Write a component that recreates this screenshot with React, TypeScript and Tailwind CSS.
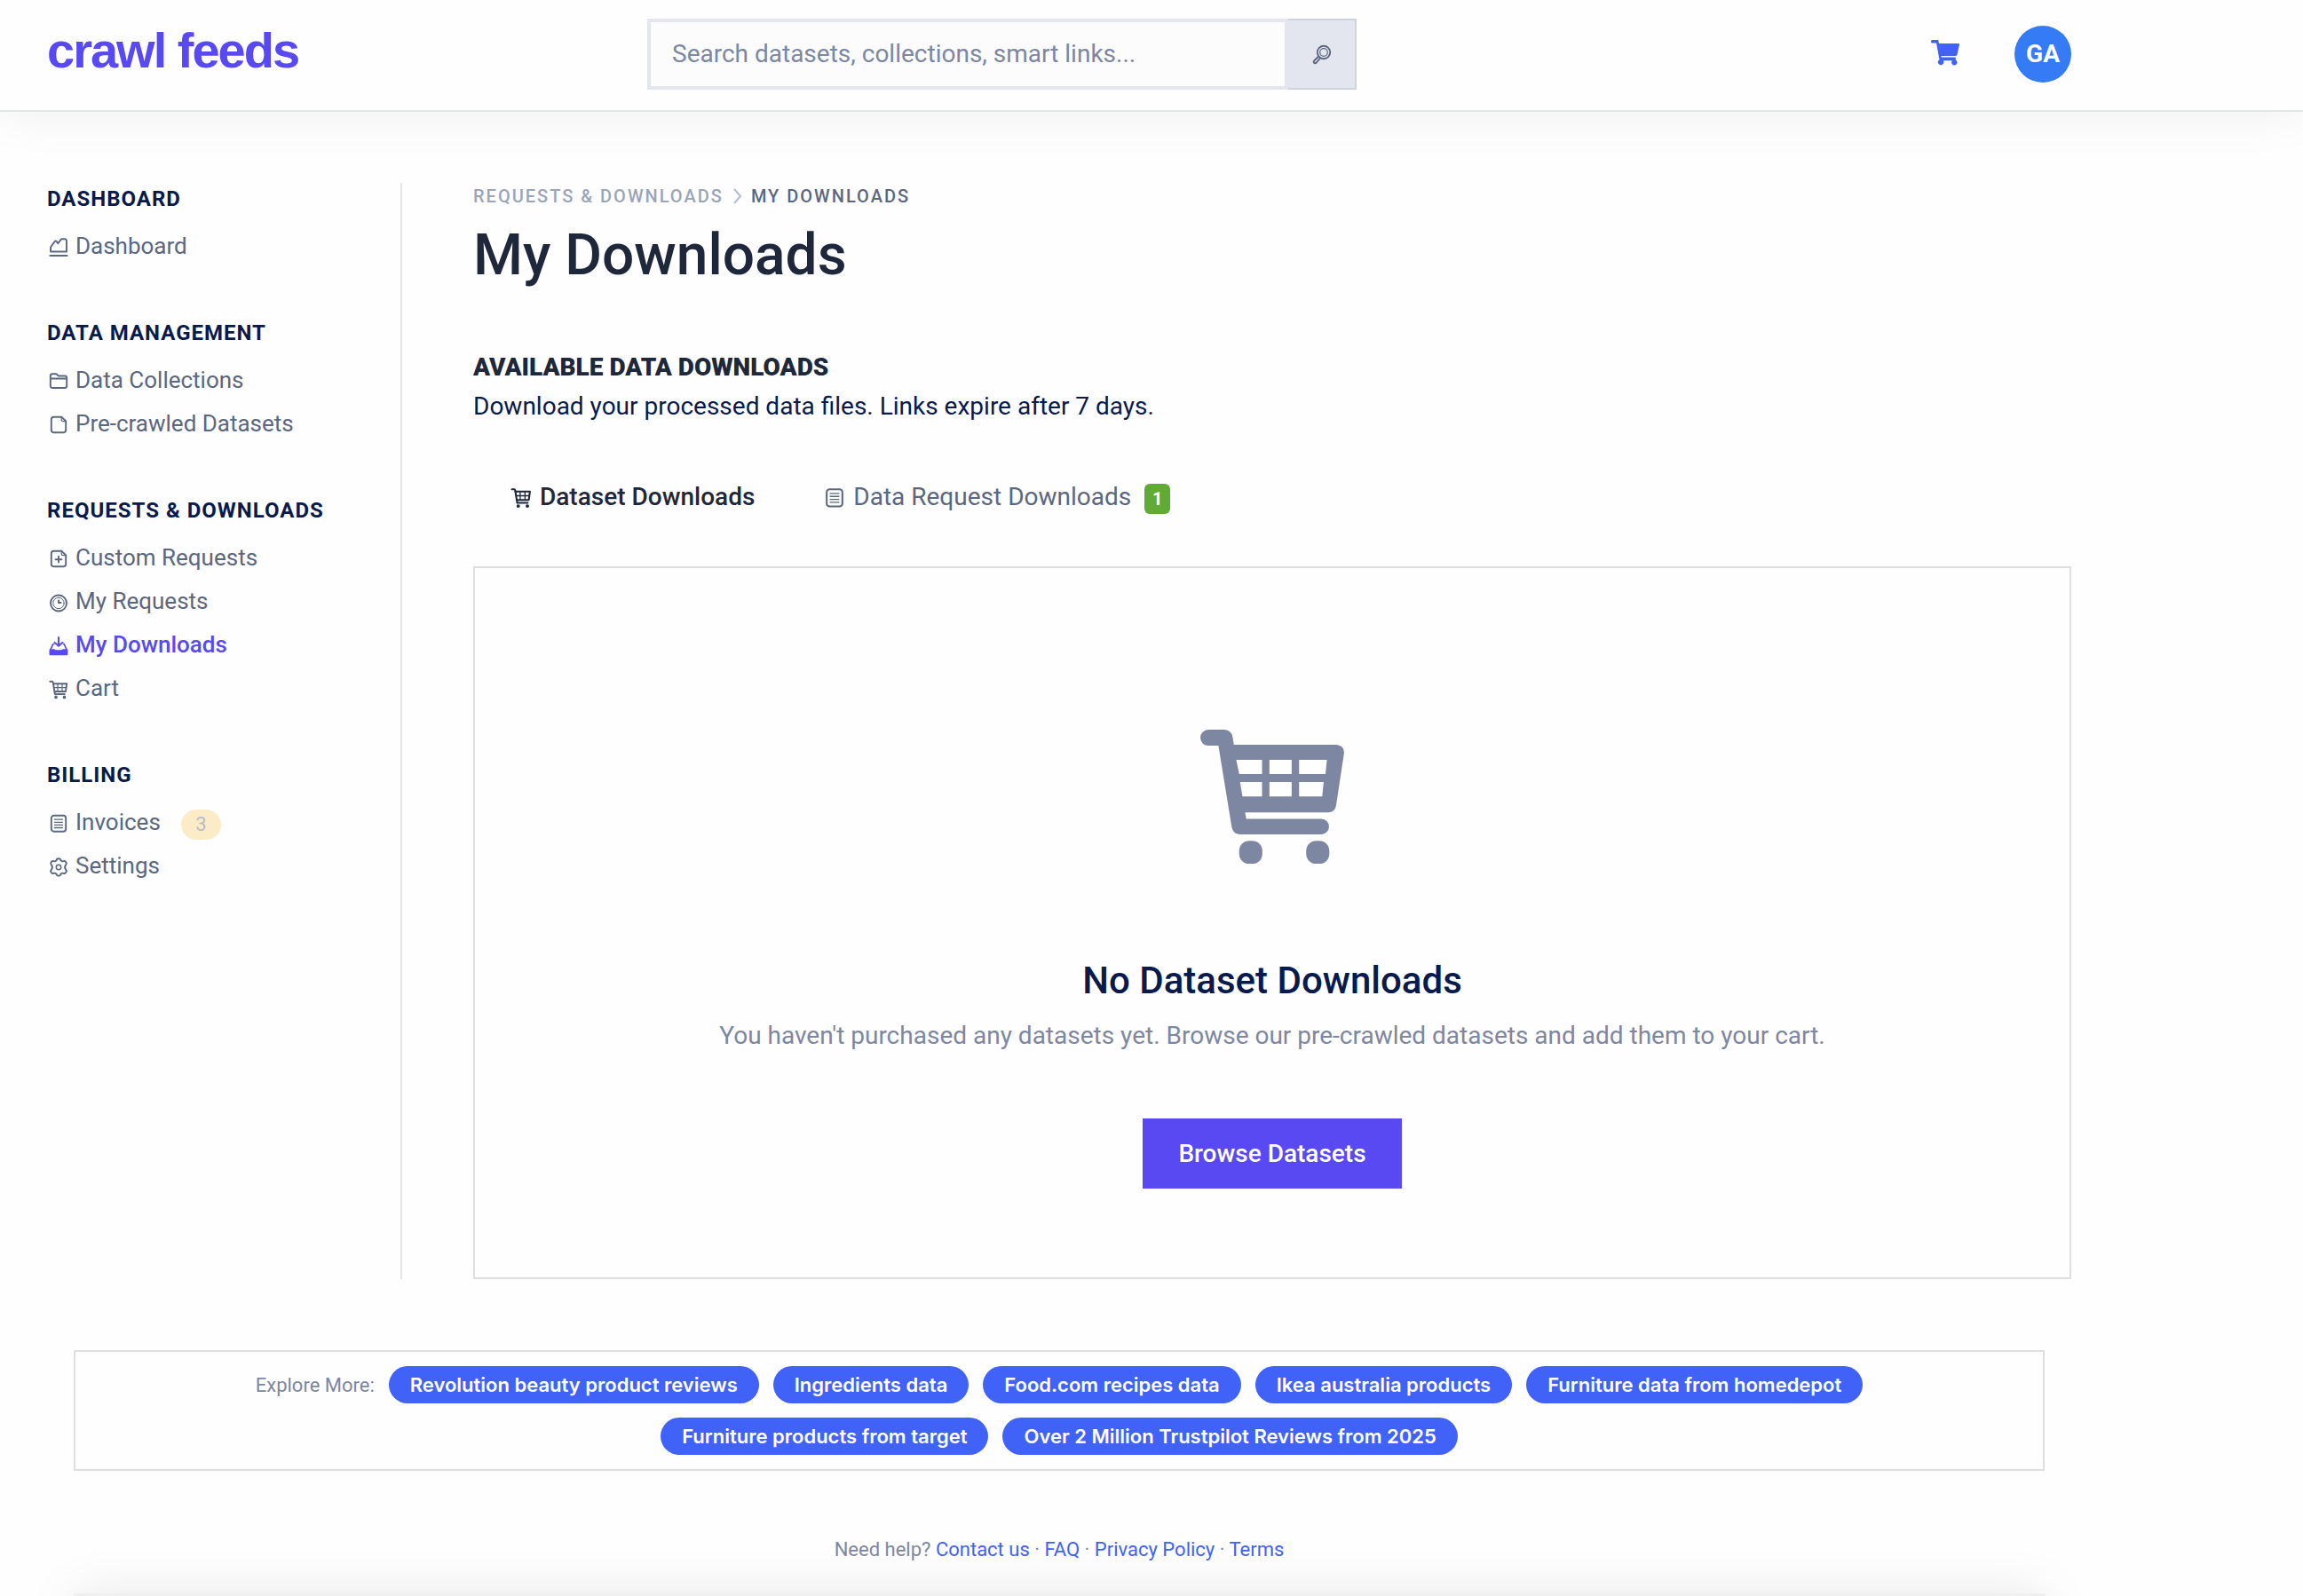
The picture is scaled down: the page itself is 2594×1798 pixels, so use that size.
import type { ReactNode } from "react";

type IconProps = { className?: string };

function LineIcon({ className = "", children }: IconProps & { children: ReactNode }) {
    return (
        <svg
            viewBox="0 0 26 26"
            fill="none"
            stroke="currentColor"
            strokeWidth="1.9"
            strokeLinejoin="round"
            strokeLinecap="round"
            aria-hidden="true"
            className={`shrink-0 ${className}`}
        >
            {children}
        </svg>
    );
}

const ChartIcon = (p: IconProps) => (
    <LineIcon {...p}>
        <path d="M4 18.5v-4.2c0-1 .3-1.600.9-2.200L8.500 7.200c1-1 2-.8 2.600.200l1.200 1.800 3-4c.5-.6 1-.9 1.900-.9h2.300c1.600 0 2.500.9 2.500 2.400v11.800z" />
        <path d="M3.500 23h19" strokeWidth="2.2" />
    </LineIcon>
);

const FolderIcon = (p: IconProps) => (
    <LineIcon {...p}>
        <path d="M3.800 18.800V7.500c0-1.500.8-2.300 2.200-2.300h4.200c1.300 0 1.700 2.300 3 2.300H20c1.400 0 2.200.8 2.200 2.200v9.100c0 1.400-.8 2.200-2.200 2.200H6c-1.400 0-2.200-.8-2.200-2.200z" />
        <path d="M4 10.500h18" />
    </LineIcon>
);

const FileIcon = (p: IconProps) => (
    <LineIcon {...p}>
        <path d="M16.500 4.800H7.500c-1.700 0-2.700 1-2.700 2.600v12.200c0 1.600 1 2.600 2.700 2.600h11c1.700 0 2.700-1 2.700-2.600V9.500z" />
        <path d="M16.200 5v2.700c0 1.200.7 1.900 1.900 1.900h3" strokeWidth="1.200" />
    </LineIcon>
);

const FilePlusIcon = (p: IconProps) => (
    <LineIcon {...p}>
        <path d="M16.500 4.800H7.500c-1.700 0-2.700 1-2.700 2.600v12.200c0 1.600 1 2.600 2.700 2.600h11c1.700 0 2.700-1 2.700-2.600V9.500z" />
        <path d="M16.200 5v2.700c0 1.200.7 1.900 1.900 1.900h3" strokeWidth="1.200" />
        <path d="M13 10.800v6.800M9.600 14.200h6.800" />
    </LineIcon>
);

const ClockIcon = (p: IconProps) => (
    <LineIcon {...p}>
        <circle cx="13" cy="14.500" r="9" />
        <circle cx="13" cy="14.500" r="6.200" strokeWidth="1" />
        <path d="M13 11.500v2.500h2.500" strokeWidth="2" />
    </LineIcon>
);

const InboxIcon = (p: IconProps) => (
    <LineIcon {...p}>
        <path d="M13 4v9.500M8.500 9.800l4.500 4 4.500-4" strokeWidth="2" />
        <path d="M7.500 11.500H6.800L3.900 18M18.500 11.500h.7l2.900 6.500" strokeWidth="1.700" />
        <path d="M3.500 18.200h4.600l1.500 1h6.800l1.500-1h4.600v5h-19z" fill="currentColor" />
    </LineIcon>
);

const CartIcon = (p: IconProps) => (
    <LineIcon {...p}>
        <path d="M3.300 4.800h2.500c.5 0 .8.3.9.800L8.900 19h11" />
        <path d="M7 7.200h15.200l-1.200 8.800H8.400" />
        <path d="M7.600 11.600h14M12 7.500v8.300M17 7.500v8.300" strokeWidth="1.200" />
        <circle cx="10" cy="22.400" r=".9" fill="currentColor" />
        <circle cx="19.500" cy="22.400" r=".9" fill="currentColor" />
    </LineIcon>
);

const ListIcon = (p: IconProps) => (
    <LineIcon {...p}>
        <rect x="4.800" y="4.800" width="16.400" height="18" rx="3" />
        <path d="M8.500 9.200h9M8.500 12.300h9M8.500 15.400h9M8.500 18.500h9" strokeWidth="1.300" />
    </LineIcon>
);

const GearIcon = (p: IconProps) => (
    <LineIcon {...p}>
        <path d="M10.500 6.300c.3-1.700 1-2 2.500-2s2.200.3 2.500 2c.8 1 1.800 1.300 3 .9 1.400-.6 2.100-.2 3 1.200.8 1.400.6 2.100-.5 3.100-1.300 1.700-1.300 3.300 0 5 1.100 1 1.300 1.700.5 3.100-.9 1.400-1.600 1.800-3 1.200-1.200-.4-2.200-.1-3 .9-.3 1.700-1 2-2.500 2s-2.200-.3-2.500-2c-.8-1-1.800-1.300-3-.9-1.400.6-2.100.2-3-1.200-.8-1.400-.6-2.100.5-3.100 1.300-1.700 1.300-3.300 0-5-1.100-1-1.300-1.700-.5-3.100.9-1.400 1.600-1.800 3-1.200 1.200.4 2.200.1 3-.9z" />
        <circle cx="13" cy="14" r="2.700" strokeWidth="1.500" />
    </LineIcon>
);

const SearchIcon = (p: IconProps) => (
    <LineIcon {...p}>
        <circle cx="15" cy="11" r="7.200" />
        <circle cx="15" cy="11" r="4.300" strokeWidth="1.200" />
        <path d="M9.300 15.500l-5 4.800c-.9 1-.8 1.900 0 2.600.8.600 1.700.5 2.500-.4l4.300-5.200" />
    </LineIcon>
);

function CartSolid({ className }: IconProps) {
    return (
        <svg viewBox="0 0 32 29" fill="currentColor" aria-hidden="true" className={className}>
            <path d="M1.500 0h5.800c.7 0 1.100.4 1.200 1l.5 2.900h21.600c.9 0 1.500.7 1.300 1.600l-2.400 11c-.2.900-.8 1.400-1.600 1.400H11.400l.3 1.600h15c.9 0 1.400.5 1.200 1.300l-.4 1.500a3.200 3.200 0 1 1-3.700 1h-10a3.200 3.200 0 1 1-4.300-1.100L6 3.500H1.500C.5 3.500 0 2.800 0 1.700S.5 0 1.500 0z" />
        </svg>
    );
}

function BigCart({ className }: IconProps) {
    return (
        <svg viewBox="157 126 485 453" fill="currentColor" aria-hidden="true" className={className}>
            <path
                fillRule="evenodd"
                d="M184 126h54q24 2 28 25l4 26h347q24 3 25 26l-27 178q-4 23-26 24H308l4 22h253a26 26 0 0 1 0 52H290q-23-2-27-24L218 180h-34a27 27 0 0 1 0-54zM278 228l10 48h77v-48zM390 228v48h75v-48zM490 228v48h89l5-48zM291 303l8 48h66v-48zM390 303v48h75v-48zM490 303v48h78l5-48z"
            />
            <rect x="288" y="501" width="78" height="78" rx="34" />
            <rect x="514" y="501" width="78" height="78" rx="34" />
        </svg>
    );
}

const sections = [
    { title: "Dashboard", items: [{ label: "Dashboard", Icon: ChartIcon }] },
    {
        title: "Data Management",
        items: [
            { label: "Data Collections", Icon: FolderIcon },
            { label: "Pre-crawled Datasets", Icon: FileIcon },
        ],
    },
    {
        title: "Requests & Downloads",
        items: [
            { label: "Custom Requests", Icon: FilePlusIcon },
            { label: "My Requests", Icon: ClockIcon },
            { label: "My Downloads", Icon: InboxIcon, active: true },
            { label: "Cart", Icon: CartIcon },
        ],
    },
    {
        title: "Billing",
        items: [
            { label: "Invoices", Icon: ListIcon, count: 3 },
            { label: "Settings", Icon: GearIcon },
        ],
    },
] as {
    title: string;
    items: { label: string; Icon: (p: IconProps) => ReactNode; active?: boolean; count?: number }[];
}[];

const exploreLinks = [
    "Revolution beauty product reviews",
    "Ingredients data",
    "Food.com recipes data",
    "Ikea australia products",
    "Furniture data from homedepot",
    "Furniture products from target",
    "Over 2 Million Trustpilot Reviews from 2025",
];

const helpLinks = ["Contact us", "FAQ", "Privacy Policy", "Terms"];

function Header() {
    return (
        <header className="border-b-2 border-[#e3e6e6] shadow-[0_0_60px_rgba(0,0,0,0.07)]">
            <div className="ml-[53px] grid h-[124px] max-w-[2280px] grid-cols-[676px_minmax(0,799px)_1fr] items-center pb-0.5">
                <a
                    href="#"
                    className="pb-2 font-['Liberation_Sans',Arial,sans-serif] text-[56px] leading-none font-bold tracking-[-2px] text-[#5849f2]"
                >
                    crawl feeds
                </a>
                <form className="flex h-20" onSubmit={(e) => e.preventDefault()}>
                    <input
                        type="search"
                        aria-label="Search"
                        placeholder="Search datasets, collections, smart links..."
                        className="min-w-0 flex-1 border-4 border-[#e3e6ee] bg-[#fcfcfc] px-6 text-[28px] text-[#3c4d62] outline-none placeholder:text-[#7d87a1]"
                    />
                    <button
                        type="submit"
                        aria-label="Submit search"
                        className="flex w-[77px] items-center justify-center border-2 border-l-0 border-[#ced2e0] bg-[#e3e6ee] text-[#5b6780]"
                    >
                        <SearchIcon className="size-[26px]" />
                    </button>
                </form>
                <div className="flex items-center justify-end gap-[62px]">
                    <a href="#" aria-label="Shopping cart" className="pb-1 text-[#4062f6]">
                        <CartSolid className="w-8" />
                    </a>
                    <button
                        type="button"
                        className="flex size-16 items-center justify-center rounded-full bg-[#357bf6] text-[28px] font-bold text-white"
                    >
                        GA
                    </button>
                </div>
            </div>
        </header>
    );
}

function Sidebar() {
    return (
        <nav className="flex w-[400px] shrink-0 flex-col gap-[58px] border-r-2 border-[#e1e5ed] pt-[3px]">
            {sections.map(({ title, items }) => (
                <div key={title}>
                    <h6 className="mb-3.5 text-[24px] leading-[30px] font-bold tracking-[1px] text-[#091a4c] uppercase">
                        {title}
                    </h6>
                    <ul>
                        {items.map(({ label, Icon, active, count }) => (
                            <li key={label}>
                                <a
                                    href="#"
                                    className={`flex h-[49px] items-center text-[26px] ${
                                        active ? "font-medium text-[#5849f2]" : "text-[#5b6780]"
                                    }`}
                                >
                                    <Icon className="mr-1.5 size-[26px]" />
                                    {label}
                                    {count && (
                                        <span className="mt-1 ml-[23px] flex h-[34px] w-[45px] items-center justify-center rounded-full bg-[#fcebc7] text-[22px] text-[#b7bdca]">
                                            {count}
                                        </span>
                                    )}
                                </a>
                            </li>
                        ))}
                    </ul>
                </div>
            ))}
        </nav>
    );
}

function Downloads() {
    return (
        <main className="ml-20 min-w-0 flex-1">
            <nav
                aria-label="Breadcrumb"
                className="flex items-center text-[20px] leading-[30px] font-medium tracking-[2px] uppercase"
            >
                <a href="#" className="text-[#9aa5bb]">
                    Requests &amp; Downloads
                </a>
                <svg viewBox="0 0 11 18" className="mx-2.5 h-[18px] w-[11px] text-[#b3bccd]" aria-hidden="true">
                    <path d="M2 1l7 8-7 8" fill="none" stroke="currentColor" strokeWidth="2" />
                </svg>
                <span className="text-[#5b6780]">My Downloads</span>
            </nav>
            <h2 className="mt-3 text-[64px] leading-20 font-medium text-[#1f273b]">My Downloads</h2>

            <h6 className="mt-16 text-[28px] leading-11 font-black text-[#1f273b] uppercase">
                Available Data Downloads
            </h6>
            <p className="text-[28px] leading-11 text-[#091a4c]">
                Download your processed data files. Links expire after 7 days.
            </p>

            <div role="tablist" className="mt-[58px] flex pl-0.5 text-[28px] leading-11">
                <button
                    type="button"
                    role="tab"
                    aria-selected="true"
                    className="flex items-center gap-[7px] px-[38px] font-medium text-[#1f273b]"
                >
                    <CartIcon className="size-7" />
                    Dataset Downloads
                </button>
                <button
                    type="button"
                    role="tab"
                    aria-selected="false"
                    className="flex items-center gap-[7px] px-[38px] text-[#5b6780]"
                >
                    <ListIcon className="size-7" />
                    Data Request Downloads
                    <span className="mt-1 ml-2 flex h-[34px] w-[29px] items-center justify-center rounded-md bg-[#60ab35] text-[20px] font-bold text-white">
                        1
                    </span>
                </button>
            </div>

            <section className="mt-14 flex flex-col items-center border-2 border-[#dfdfdf] px-6 pt-[182px] pb-[100px] text-center">
                <BigCart className="w-[162px] text-[#7d87a1]" />
                <h4 className="mt-[104px] text-[42px] leading-14 font-medium text-[#091a4c]">No Dataset Downloads</h4>
                <p className="mt-3 text-[28px] leading-11 text-[#7d87a1]">
                    You haven't purchased any datasets yet. Browse our pre-crawled datasets and add them to your cart.
                </p>
                <a
                    href="#"
                    className="mt-[71px] flex h-[79px] items-center bg-[#5849f2] px-10 text-[28px] font-medium text-white"
                >
                    Browse Datasets
                </a>
            </section>
        </main>
    );
}

function Footer() {
    return (
        <footer className="mx-[30px] mt-20">
            <div className="flex flex-wrap items-center justify-center gap-4 border-2 border-[#dfdfdf] px-40 py-4">
                <span className="text-[22px] text-[#7d87a1]">Explore More:</span>
                {exploreLinks.map((label) => (
                    <a
                        key={label}
                        href="#"
                        className="flex h-[42px] items-center rounded-full bg-[#4062f6] px-6 font-[Inter,sans-serif] text-[22px] font-semibold text-white"
                    >
                        {label}
                    </a>
                ))}
            </div>
            <p className="mt-[71px] text-center text-[22px] leading-9 text-[#7d87a1]">
                Need help?{" "}
                {helpLinks.map((label, i) => (
                    <span key={label}>
                        {i > 0 && " · "}
                        <a href="#" className="text-[#4062f6]">
                            {label}
                        </a>
                    </span>
                ))}
            </p>
            {/* only the top edge of the bottom bar shows, with its shadow above */}
            <div className="mt-[31px] -mb-[97px] h-[100px] bg-[#f0f0f0] shadow-[0_0_60px_rgba(0,0,0,0.09)]" />
        </footer>
    );
}

export default function App() {
    return (
        <div className="overflow-hidden bg-[#fefefe] font-[Roboto,sans-serif]">
            <Header />
            <div className="ml-[53px] max-w-[2280px]">
                <div className="mt-20 flex">
                    <Sidebar />
                    <Downloads />
                </div>
                <Footer />
            </div>
        </div>
    );
}
